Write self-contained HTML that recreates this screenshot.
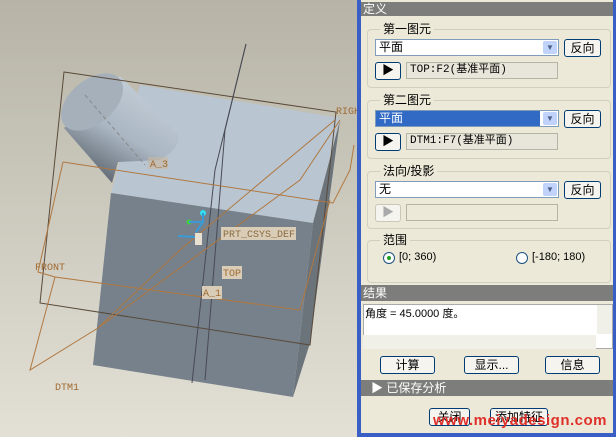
<!DOCTYPE html>
<html><head><meta charset="utf-8"><style>
*{margin:0;padding:0;box-sizing:border-box}
body{width:616px;height:437px;overflow:hidden;position:relative;font-family:"Liberation Sans","Noto Sans CJK SC",sans-serif;font-size:12px;background:#d8d5c8}
.a{position:absolute}
#panel{left:357px;top:0;width:259px;height:437px;background:#3a5fc4}
#in{position:absolute;left:4px;top:0;width:252px;height:433px;background:#ece9d8}
.bar{position:absolute;left:0;width:252px;background:#7d7d7b;color:#fff;font-size:12px;line-height:14px;padding-left:2px}
.grp{position:absolute;left:6px;width:244px;border:1px solid #d0d0bf;border-radius:4px}
.lbl{position:absolute;background:#ece9d8;padding:0 3px;font-size:12px;line-height:14px;color:#000}
.sel{position:absolute;height:17px;background:#fff;border:1px solid #7f9db9;font-size:12px;line-height:15px;padding-left:3px}
.dd{position:absolute;right:1px;top:1px;width:14px;height:13px;background:#c1d3fb;border-radius:2px;color:#4d6185;font-size:8px;text-align:center;line-height:13px}
.btn{position:absolute;height:18px;border:1px solid #003c74;border-radius:3px;background:#f5f4ef;font-size:12px;line-height:16px;text-align:center}
.fld{position:absolute;height:17px;border:1px solid #b5b5a5;background:#e8e6da;font-size:11px;line-height:15px;padding-left:3px;font-family:"Liberation Mono","Noto Sans CJK SC",monospace}
</style></head><body>
<svg class="a" style="left:0;top:0" width="357" height="437">
<defs>
<linearGradient id="bg" x1="0" y1="0" x2="0" y2="1"><stop offset="0" stop-color="#b7b4a7"/><stop offset="1" stop-color="#e3e0d6"/></linearGradient>
<linearGradient id="cyl" x1="0" y1="1" x2="0.6" y2="0"><stop offset="0" stop-color="#3f4750"/><stop offset="0.55" stop-color="#aab6c2"/><stop offset="1" stop-color="#c4ced8"/></linearGradient>
</defs>
<rect width="357" height="437" fill="url(#bg)"/>
<polygon points="120,161 140,85 340,118 313,223 111,193" fill="#b9c6d2"/>
<polygon points="313,223 340,120 310,343 293,397" fill="#6b737b"/>
<polygon points="111,193 313,223 293,397 93,365" fill="#76818b"/>
<path d="M64,128 L112,183 L118,162 L160,160 C178,150 182,138 176,132 L120,76 Z" fill="url(#cyl)"/>
<ellipse cx="92" cy="102" rx="36" ry="22" transform="rotate(-40 92 102)" fill="#a5b0bb"/>
<g fill="none" stroke-width="1">
<polygon points="64,72 336,112 310,345 40,303" stroke="#5a4a3a"/>
<path d="M246,44 L215,170 L192,383" stroke="#4a4a55"/>
<path d="M246,44 L225,130 L205,380" stroke="#4a4a55"/>
<path d="M63,162 L333,203 L350,170 L354,145 M63,162 L38,272 L55,277 L300,310 L330,200 M55,277 L30,370 L98,328 L180,250 L335,120" stroke="#b07840"/>
<path d="M98,328 L300,180 L340,120" stroke="#b07840"/>
<path d="M85,95 L145,165" stroke="#888" stroke-dasharray="4,3"/>
</g>
<g font-family="Liberation Mono,monospace" font-size="10" fill="#a06a30">
<rect x="148" y="157" width="20" height="12" fill="#c9b8a0" opacity=".6"/><text x="150" y="167">A_3</text>
<text x="336" y="114">RIGH</text>
<text x="35" y="270">FRONT</text>
<text x="55" y="390">DTM1</text>
<rect x="221" y="227" width="75" height="13" fill="#d9cdb8"/><text x="223" y="237" fill="#8a6a40">PRT_CSYS_DEF</text>
<rect x="222" y="266" width="20" height="13" fill="#d9cdb8"/><text x="223" y="276">TOP</text>
<rect x="202" y="286" width="20" height="13" fill="#d9cdb8"/><text x="203" y="296">A_1</text>
</g>
<circle cx="203" cy="213" r="3" fill="#30e0f0"/><circle cx="189" cy="222" r="2.5" fill="#40d040"/>
<path d="M189,222 L203,222 L203,213 M203,222 L196,232 M195,237 L178,236" stroke="#3a9ad8" stroke-width="2" fill="none"/>
<rect x="195" y="233" width="7" height="12" fill="#e8e0d0"/>
</svg>
<div id="panel" class="a"><div id="in">
<div class="bar" style="top:2px;height:14px">定义</div>
<div class="grp" style="top:29px;height:59px"></div>
<div class="lbl" style="left:19px;top:22px">第一图元</div>
<div class="sel" style="left:14px;top:39px;width:184px">平面<div class="dd">▼</div></div>
<div class="btn" style="left:203px;top:39px;width:37px">反向</div>
<div class="btn" style="left:14px;top:62px;width:26px;line-height:15px">▶</div>
<div class="fld" style="left:45px;top:62px;width:152px">TOP:F2(基准平面)</div>
<div class="grp" style="top:100px;height:59px"></div>
<div class="lbl" style="left:19px;top:93px">第二图元</div>
<div class="sel" style="left:14px;top:110px;width:184px;background:#fff"><span style="display:block;width:164px;height:15px;margin-left:-3px;padding-left:3px;background:#316ac5;color:#fff">平面</span><div class="dd">▼</div></div>
<div class="btn" style="left:203px;top:110px;width:37px">反向</div>
<div class="btn" style="left:14px;top:133px;width:26px;line-height:15px">▶</div>
<div class="fld" style="left:45px;top:133px;width:152px">DTM1:F7(基准平面)</div>
<div class="grp" style="top:171px;height:58px"></div>
<div class="lbl" style="left:19px;top:164px">法向/投影</div>
<div class="sel" style="left:14px;top:181px;width:184px">无<div class="dd">▼</div></div>
<div class="btn" style="left:203px;top:181px;width:37px">反向</div>
<div class="btn" style="left:14px;top:204px;width:26px;border-color:#c9c7ba;color:#aaa;line-height:15px">▶</div>
<div class="fld" style="left:45px;top:204px;width:152px;background:#ece9d8"></div>
<div class="grp" style="top:240px;height:43px"></div>
<div class="lbl" style="left:19px;top:233px">范围</div>
<div class="a" style="left:22px;top:252px;width:12px;height:12px;border:1px solid #1c5180;border-radius:50%;background:#fff"><div style="margin:3px;width:4px;height:4px;border-radius:50%;background:#21a121"></div></div>
<div class="a" style="left:38px;top:251px;font-size:11px">[0; 360)</div>
<div class="a" style="left:155px;top:252px;width:12px;height:12px;border:1px solid #1c5180;border-radius:50%;background:#fff"></div>
<div class="a" style="left:171px;top:251px;font-size:11px">[-180; 180)</div>
<div class="bar" style="top:285px;height:16px;line-height:16px">结果</div>
<div class="a" style="left:2px;top:304px;width:250px;height:45px;background:#fff;border:1px solid #aaa"></div>
<div class="a" style="left:4px;top:305px;font-size:11px">角度 = 45.0000 度。</div>
<div class="a" style="left:2px;top:335px;width:233px;height:14px;background:#f0efe8"></div>
<div class="a" style="left:236px;top:305px;width:15px;height:29px;background:#f0efe8"></div>
<div class="btn" style="left:19px;top:356px;width:55px">计算</div>
<div class="btn" style="left:103px;top:356px;width:55px">显示...</div>
<div class="btn" style="left:184px;top:356px;width:55px">信息</div>
<div class="bar" style="top:380px;height:16px;line-height:16px;padding-left:10px">▶ 已保存分析</div>
<div class="btn" style="left:68px;top:408px;width:41px">关闭</div>
<div class="btn" style="left:129px;top:408px;width:58px">添加特征</div>
<div class="a" style="left:72px;top:412px;font-size:15px;font-weight:bold;color:#e0302a;letter-spacing:.5px">www.meiyadesign.com</div>
</div></div>
</body></html>
